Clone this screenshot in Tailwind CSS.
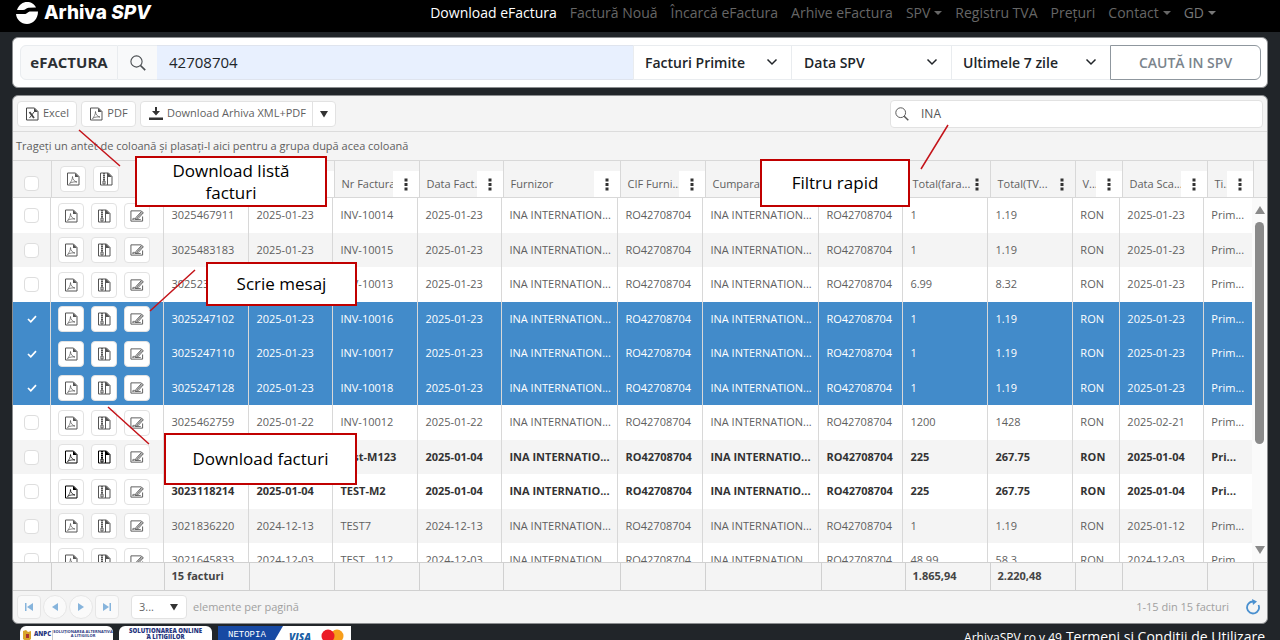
<!DOCTYPE html>
<html lang="ro">
<head>
<meta charset="utf-8">
<title>Arhiva SPV</title>
<script src="https://cdn.jsdelivr.net/npm/@tailwindcss/browser@4"></script>
</head>
<body class="relative flex h-screen flex-col overflow-hidden bg-[#212529] font-['Open_Sans','Noto_Sans',sans-serif] text-[11px] text-[#5f5f5f]">

<svg class="hidden" aria-hidden="true">
  <symbol id="pdf" viewBox="0 0 14 14"><path d="M1.500 1h8L13 4.500V13H1.500z" fill="none" stroke="currentColor"/><path d="M9 1v4h4z" fill="currentColor"/><path d="M3.500 11.500C5 10 6.500 7.500 6.500 4.500c0 3 2 5 4.500 5.500-3-.3-5 0-7.500 1.500z" fill="none" stroke="currentColor" stroke-width=".7"/></symbol>
  <symbol id="zip" viewBox="0 0 14 14"><path d="M1.500 1h8L13 4.500V13H1.500z" fill="none" stroke="currentColor"/><path d="M9 1v4h4z" fill="currentColor"/><path d="M5 1v8" stroke="currentColor" stroke-width="2" stroke-dasharray="1.500 .5"/><path d="M4 9h2v3H4z" fill="none" stroke="currentColor"/><path d="M8.500 1v12" stroke="currentColor" stroke-width="1"/></symbol>
  <symbol id="sign" viewBox="0 0 15 14"><path d="M12 1.500H1v11h12.500V7.500" fill="none" stroke="currentColor"/><path d="M6.500 8.500 12.500 2l1.800 1.500L8.500 10l-2.500.6z" fill="none" stroke="currentColor"/><path d="m7.500 9 5.500-6" stroke="currentColor"/><path d="M2.500 11c1-2.500 1.500-2 1.500 0 1-2 1.500-2 1.800-.3h5.700" fill="none" stroke="currentColor" stroke-width=".9"/></symbol>
  <symbol id="xls" viewBox="0 0 14 14"><path d="M1.500 1h8L13 4.500V13H1.500z" fill="none" stroke="currentColor"/><path d="M9 1v4h4z" fill="currentColor"/><path d="m4.500 5 4.500 6" stroke="currentColor" stroke-width="1.800"/><path d="m9 5-4.500 6" stroke="currentColor"/></symbol>
  <symbol id="glass" viewBox="0 0 16 16"><circle cx="6.500" cy="6.500" r="5.600" fill="none" stroke="currentColor" stroke-width="1.100"/><path d="m10.500 10.500 4.700 4.700" stroke="currentColor" stroke-width="1.700"/></symbol>
  <symbol id="chev" viewBox="0 0 12 8"><path d="m1.500 1.500 4.500 4.500 4.500-4.500" fill="none" stroke="currentColor" stroke-width="1.500"/></symbol>
  <symbol id="caret" viewBox="0 0 8 8"><path d="M0 1h8L4 7.500z" fill="currentColor"/></symbol>
  <symbol id="drop" viewBox="0 0 8 4"><path d="M0 0h8L4 4z" fill="currentColor"/></symbol>
  <symbol id="dots" viewBox="0 0 4 13"><path d="M.5.500h3v3h-3zm0 4.500h3v3h-3zm0 4.500h3v3h-3z" fill="currentColor"/></symbol>
</svg>

<nav class="flex h-8 shrink-0 items-start justify-between bg-black pl-4 pr-16">
  <a href="#" class="flex items-center gap-1.5 pt-0.5 text-white">
    <svg class="h-[22px] w-[22px]" viewBox="0 0 22 22" aria-hidden="true"><path d="M1 8C3 2.500 7 0 11 0c4 0 7.500 2 9 5.500l-7.500.2C10 5.800 9.500 8 7 8zM0 12h8.500c3 0 3-2.500 6-2.500H22C22 17 17 22 11 22S.500 17.500 0 12z" fill="currentColor"/></svg>
    <span class="font-[Inter,'Open_Sans',sans-serif] text-[19px] leading-[22px] font-extrabold">Arhiva <i>SPV</i></span>
  </a>
  <div class="flex gap-[13px] pt-[3px] text-sm leading-5 text-[#666]">
    <a href="#" class="font-medium text-white">Download eFactura</a>
    <a href="#">Factură Nouă</a>
    <a href="#">Încarcă eFactura</a>
    <a href="#">Arhive eFactura</a>
    <a href="#" class="flex items-center gap-1">SPV<svg class="h-1 w-2"><use href="#drop"/></svg></a>
    <a href="#">Registru TVA</a>
    <a href="#">Prețuri</a>
    <a href="#" class="flex items-center gap-1">Contact<svg class="h-1 w-2"><use href="#drop"/></svg></a>
    <a href="#" class="flex items-center gap-1 font-medium text-[#777]">GD<svg class="h-1 w-2"><use href="#drop"/></svg></a>
  </div>
</nav>

<form class="mx-3 mt-[5px] flex h-[51px] shrink-0 rounded-md border border-[#8b8d8f] bg-white py-[7px] pr-1.5 pl-[7px] text-[15px] text-[#212529]">
  <label for="cif" class="flex w-[98px] items-center justify-center rounded-l-md border border-[#e9ecef] bg-[#f8f9fa] font-bold text-[#2b2f33]">eFACTURA</label>
  <button type="button" aria-label="Caută" class="flex w-[39px] items-center justify-center border-y border-[#e9ecef] bg-[#f8f9fa] text-[#4a4e52]"><svg class="h-4 w-4"><use href="#glass"/></svg></button>
  <input id="cif" value="42708704" class="min-w-0 flex-1 border-y border-[#dfe4ee] bg-[#e8f0fe] px-3 outline-none">
  <div class="relative w-[159px] border border-[#e9ecef] text-sm font-semibold"><select aria-label="Tip facturi" class="h-full w-full appearance-none bg-transparent pl-[11px] outline-none"><option>Facturi Primite</option></select><svg class="pointer-events-none absolute top-3 right-[13px] h-2 w-3"><use href="#chev"/></svg></div>
  <div class="relative w-[159px] border-y border-[#e9ecef] text-sm font-semibold"><select aria-label="Tip dată" class="h-full w-full appearance-none bg-transparent pl-3 outline-none"><option>Data SPV</option></select><svg class="pointer-events-none absolute top-3 right-[13px] h-2 w-3"><use href="#chev"/></svg></div>
  <div class="relative w-[159px] border-y border-l border-[#e9ecef] text-sm font-semibold"><select aria-label="Perioada" class="h-full w-full appearance-none bg-transparent pl-[11px] outline-none"><option>Ultimele 7 zile</option></select><svg class="pointer-events-none absolute top-3 right-[13px] h-2 w-3"><use href="#chev"/></svg></div>
  <button type="button" class="w-[151px] rounded-r-md border border-[#8f979e] text-sm font-semibold text-[#7b848c]">CAUTĂ IN SPV</button>
</form>

<main class="mx-3 mt-[7px] flex min-h-0 flex-1 flex-col overflow-hidden rounded-md border border-[#8b8d8f] bg-[#f4f4f4]">
  <div class="flex h-9 shrink-0 items-center justify-between border-b border-[#dcdcdc] pr-1 pl-1">
    <div class="flex gap-1">
      <button class="flex h-[26px] w-[60px] items-center justify-center gap-1 rounded border border-[#e2e2e2] bg-white"><svg class="h-3.5 w-3.5 text-[#444]"><use href="#xls"/></svg>Excel</button>
      <button class="flex h-[26px] w-[55px] items-center justify-center gap-1 rounded border border-[#e2e2e2] bg-white"><svg class="h-3.5 w-3.5 text-[#555]"><use href="#pdf"/></svg>PDF</button>
      <div class="flex h-[26px] rounded border border-[#e2e2e2] bg-white">
        <button class="flex w-[172px] items-center gap-1 border-r border-[#e2e2e2] pl-2 whitespace-nowrap"><svg class="h-3.5 w-3.5 shrink-0 text-[#333]" viewBox="0 0 14 14"><path d="M6 0h2v4h3L7 8.500 3 4h3zM0 10.500h14V13H0z" fill="currentColor"/></svg>Download Arhiva XML+PDF</button>
        <button aria-label="Mai multe" class="flex w-[22px] items-center justify-center text-[#333]"><svg class="h-2 w-2"><use href="#caret"/></svg></button>
      </div>
    </div>
    <label class="flex h-7 w-[373px] items-center gap-3 rounded border border-[#e2e2e2] bg-white px-1 text-[#555]"><svg class="h-3.5 w-3.5"><use href="#glass"/></svg><input aria-label="Filtru rapid" value="INA" class="min-w-0 flex-1 text-xs outline-none"></label>
  </div>
  <p class="flex h-7 shrink-0 items-center pl-[3px]">Trageți un antet de coloană și plasați-l aici pentru a grupa după acea coloană</p>

  <table class="w-full shrink-0 table-fixed border-collapse">
    <thead><tr id="head" class="h-[37px] border-y border-[#d8d8d8]"></tr></thead>
  </table>

  <div class="flex min-h-0 flex-1">
    <div class="min-w-0 flex-1 overflow-hidden">
      <table class="w-full table-fixed border-collapse">
        <tbody id="rows"></tbody>
      </table>
    </div>
    <div class="flex w-[15px] flex-col items-center bg-[#fafafa] py-2 text-[#8a8a8a]">
      <svg class="h-2 w-2.5" viewBox="0 0 10 8"><path d="M5 0l5 8H0z" fill="currentColor"/></svg>
      <div class="mt-2 h-[222px] w-[9px] rounded-full bg-[#8a8a8a]"></div>
      <svg class="mt-auto h-2 w-2.5" viewBox="0 0 10 8"><path d="M0 0h10L5 8z" fill="currentColor"/></svg>
    </div>
  </div>

  <table class="w-full shrink-0 table-fixed border-collapse">
    <tbody><tr id="totals" class="h-7 border-y border-[#d0d0d0] font-bold text-[#444]"></tr></tbody>
  </table>

  <div class="flex h-8 shrink-0 items-center gap-0.5 px-1 text-[#a0a0a0]">
    <button aria-label="Prima pagină" class="flex h-6 w-6 items-center justify-center rounded border border-[#e6e6e6] bg-[#fafafa] text-[#86b4dc]"><svg class="h-2 w-2" viewBox="0 0 8 8"><path d="M0 0h1.500v8H0zM8 0v8L2 4z" fill="currentColor"/></svg></button>
    <button aria-label="Pagina anterioară" class="flex h-6 w-6 items-center justify-center rounded-full border border-[#e6e6e6] bg-[#fafafa] text-[#86b4dc]"><svg class="h-2 w-2" viewBox="0 0 8 8"><path d="M7 0v8L1 4z" fill="currentColor"/></svg></button>
    <button aria-label="Pagina următoare" class="flex h-6 w-6 items-center justify-center rounded-full border border-[#e6e6e6] bg-[#fafafa] text-[#86b4dc]"><svg class="h-2 w-2" viewBox="0 0 8 8"><path d="M1 0v8l6-4z" fill="currentColor"/></svg></button>
    <button aria-label="Ultima pagină" class="flex h-6 w-6 items-center justify-center rounded border border-[#e6e6e6] bg-[#fafafa] text-[#86b4dc]"><svg class="h-2 w-2" viewBox="0 0 8 8"><path d="M0 0v8l6-4zM6.500 0H8v8H6.500z" fill="currentColor"/></svg></button>
    <div class="relative ml-2.5 h-6 w-14 rounded border border-[#e2e2e2] bg-white text-[#666]"><select id="size" class="h-full w-full appearance-none bg-transparent pl-[7px] outline-none"><option>3...</option></select><svg class="pointer-events-none absolute top-[7px] right-2 h-2 w-2 text-[#333]"><use href="#caret"/></svg></div>
    <label for="size" class="pl-1">elemente per pagină</label>
    <span class="ml-auto">1-15 din 15 facturi</span>
    <button aria-label="Reîncarcă" class="mr-0.5 ml-3.5 text-[#4a90cf]"><svg class="h-4 w-4" viewBox="0 0 16 16"><path d="M8 2.500A6 6 0 1 0 13.500 6" fill="none" stroke="currentColor" stroke-width="1.800"/><path d="M7 0l5 2.600L8 6z" fill="currentColor"/></svg></button>
  </div>
</main>

<footer class="flex h-4 shrink-0 items-start justify-between overflow-hidden pr-[15px] pl-5 text-white">
  <div class="flex gap-1.5 pt-0.5 text-[#27357e]">
    <a href="#" class="flex h-6 w-[93px] rounded-md bg-white pt-1 leading-[6px] font-extrabold">
      <svg class="mr-0.5 ml-0.5 h-3 w-2.5 shrink-0" viewBox="0 0 10 12"><path d="M1 1l3-1 2 2 3-1v8l-4 3-4-3z" fill="#d9a52c"/><path d="M4 4h3v4H4z" fill="#a33"/></svg>
      <span class="w-[19px] shrink-0 border-r border-[#ccc] pt-px text-[6px]">ANPC</span><span class="flex-1 text-center text-[4px] leading-[4px] font-bold whitespace-nowrap">SOLUȚIONAREA ALTERNATIVĂ<br>A LITIGIILOR</span>
    </a>
    <a href="#" class="h-6 w-[93px] rounded-md bg-white pt-0.5 text-center text-[6px] leading-[6px] font-extrabold">SOLUȚIONAREA ONLINE<br>A LITIGIILOR</a>
    <a href="#" aria-label="Netopia Visa Mastercard" class="h-6"><svg class="h-6 w-[133px]" viewBox="0 0 133 24"><path d="M0 0h133v24H0z" fill="#fff"/><path d="M0 0h65L51 24H0z" fill="#1749a3"/><text x="10" y="11" font-family="Liberation Mono" font-size="9" fill="#fff">NETOPIA</text><text x="71" y="15" font-family="Open Sans" font-size="10" font-weight="800" font-style="italic" fill="#1a5fa5">VISA</text><circle cx="119" cy="10" r="6.500" fill="#f79e1b"/><circle cx="110" cy="10" r="6.500" fill="#eb1c26"/></svg></a>
  </div>
  <div class="flex items-baseline gap-1 pt-[3px] whitespace-nowrap"><span class="text-xs">ArhivaSPV.ro v.49</span><a href="#" class="text-sm">Termeni si Conditii de Utilizare</a></div>
</footer>

<!-- Annotations over the grid -->
<svg class="pointer-events-none absolute top-0 left-0 h-[640px] w-[1280px]" stroke="#c4141a" stroke-width="1.500" aria-hidden="true"><path d="M79 130 120 166M948 125 921 169M195 270 150 311M108 407 149 444"/></svg>
<div class="absolute top-[156px] left-[135px] flex h-[51px] w-[192px] items-center justify-center border-2 border-[#c00000] bg-white px-6 text-center text-[17px] leading-[22px] text-black">Download listă facturi</div>
<div class="absolute top-[262px] left-[206px] flex h-11 w-[151px] items-center justify-center border-2 border-[#c00000] bg-white text-[17px] text-black">Scrie mesaj</div>
<div class="absolute top-[433px] left-[164px] flex h-[52px] w-[193px] items-center justify-center border-2 border-[#c00000] bg-white text-[17px] text-black">Download facturi</div>
<div class="absolute top-[159px] left-[760px] flex h-12 w-[150px] items-center justify-center border-2 border-[#c00000] bg-white text-[17px] text-black">Filtru rapid</div>

<script>
const headW = [38,113,85,85,85,84,117,85,116,84,85,85,47,85,46,14];
const bodyW = [38,113,85,84,85,84,116,85,116,84,85,85,47,84,48];
const cols = (w) => { const s = w.reduce((a, b) => a + b); return '<colgroup>' + w.map(x => `<col style="width:${x / s * 100}%">`).join('') + '</colgroup>'; };
const btn = (id, label, dark) => `<button aria-label="${label}" class="flex h-[26px] w-[26px] items-center justify-center rounded border border-[#e2e2e2] bg-white ${dark ? 'text-black' : 'text-[#555]'}"><svg class="h-3.5 w-3.5"><use href="#${id}"/></svg></button>`;
const box = (on, label) => `<label class="grid place-items-center"><input type="checkbox" aria-label="${label}" ${on ? 'checked' : ''} class="col-start-1 row-start-1 h-[15px] w-[15px] appearance-none rounded border border-[#dedede] bg-white checked:border-transparent checked:bg-transparent">${on ? '<svg class="pointer-events-none col-start-1 row-start-1 h-2 w-2.5" viewBox="0 0 10 8"><path d="m1 4 2.800 2.800L9 1.200" fill="none" stroke="#fff" stroke-width="1.700"/></svg>' : ''}</label>`;

const heads = ['ID','Data SPV','Nr Factura','Data Fact..','Furnizor','CIF Furni...','Cumparator','CIF Cump...','Total(fara...','Total(TV...','V...','Data Sca...','Ti..'];
const head = document.getElementById('head');
head.innerHTML = `<th class="border-r border-[#d8d8d8] p-0 pt-2">${box(false, 'Selectează tot')}</th><th class="border-r border-[#d8d8d8] p-0"><div class="flex gap-[7px] pl-2">${btn('pdf', 'PDF')}${btn('zip', 'ZIP')}</div></th>` +
  heads.map((h, i) => `<th class="border-r border-[#d8d8d8] p-0 align-bottom font-normal"><div class="flex h-[26px] items-center pl-[7px]"><span class="min-w-0 flex-1 text-left whitespace-nowrap">${h}</span><button aria-label="Meniu coloană" class="flex h-full w-[26px] shrink-0 items-center justify-center text-[#333] ${i === 8 || i === 9 ? '' : 'bg-white'}"><svg class="h-[13px] w-1"><use href="#dots"/></svg></button></div></th>`).join('') + '<th></th>';
head.parentNode.insertAdjacentHTML('beforebegin', cols(headW));

const A = 'INA INTERNATION...', B = 'INA INTERNATIO...', R = 'RO42708704';
const data = [
  ['3025467911','2025-01-23','INV-10014','2025-01-23','1','1.19','2025-01-23'],
  ['3025483183','2025-01-23','INV-10015','2025-01-23','1','1.19','2025-01-23'],
  ['3025239999','2025-01-23','INV-10013','2025-01-23','6.99','8.32','2025-01-23'],
  ['3025247102','2025-01-23','INV-10016','2025-01-23','1','1.19','2025-01-23','sel'],
  ['3025247110','2025-01-23','INV-10017','2025-01-23','1','1.19','2025-01-23','sel'],
  ['3025247128','2025-01-23','INV-10018','2025-01-23','1','1.19','2025-01-23','sel'],
  ['3025462759','2025-01-22','INV-10012','2025-01-22','1200','1428','2025-02-21'],
  ['3023118215','2025-01-04','Test-M123','2025-01-04','225','267.75','2025-01-04','new'],
  ['3023118214','2025-01-04','TEST-M2','2025-01-04','225','267.75','2025-01-04','new'],
  ['3021836220','2024-12-13','TEST7','2024-12-13','1','1.19','2025-01-12'],
  ['3021645833','2024-12-03','TEST__112','2024-12-03','48.99','58.3','2024-12-03'],
];
const rows = document.getElementById('rows');
rows.innerHTML = data.map((d, n) => {
  const sel = d[7] === 'sel', bold = d[7] === 'new', name = bold ? B : A;
  const line = 'border-r border-[#d8d8d8]';
  const vals = [d[0], d[1], d[2], d[3], name, R, name, R, d[4], d[5], 'RON', d[6], bold ? 'Pri...' : 'Prim...'];
  return `<tr class="h-[35px] even:h-[34px] ${sel ? 'bg-[#428bca] text-white' : 'bg-white even:bg-[#f4f4f4]'} ${bold ? 'font-bold text-[#333]' : ''}"><td class="p-0 ${line}">${box(sel, 'Selectează ' + d[0])}</td><td class="p-0 ${line}"><div class="flex gap-[7px] pl-[7px]">${btn('pdf', 'PDF', bold)}${btn('zip', 'ZIP', bold && n === 7)}${btn('sign', 'Scrie mesaj')}</div></td>` +
    vals.map((v, i) => `<td class="overflow-hidden p-0 pl-[7px] whitespace-nowrap ${i < 12 ? line : ''}">${v}</td>`).join('') + '</tr>';
}).join('');
rows.insertAdjacentHTML('beforebegin', cols(bodyW));

const totals = document.getElementById('totals');
totals.innerHTML = headW.map((w, i) => `<td class="p-0 pl-[7px] whitespace-nowrap ${i < 15 ? 'border-r border-[#d0d0d0]' : ''}">${{2: '15 facturi', 10: '1.865,94', 11: '2.220,48'}[i] || ''}</td>`).join('');
totals.parentNode.insertAdjacentHTML('beforebegin', cols(headW));
</script>
</body>
</html>
